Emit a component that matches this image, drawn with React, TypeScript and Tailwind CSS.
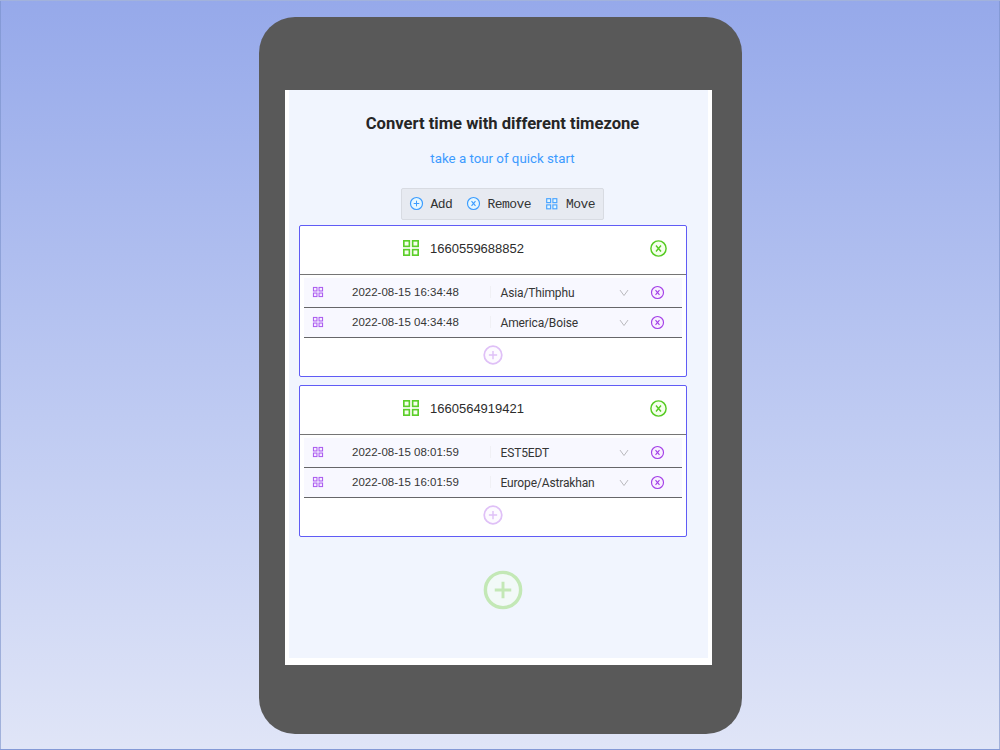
import { clsx } from "clsx";

type IconProps = {
  size: number;
  color: string;
  fill?: string;
  className?: string;
};

function PlusCircle({ size, color, fill = "none", className }: IconProps) {
  return (
    <svg width={size} height={size} viewBox="0 0 1024 1024" className={clsx("block shrink-0", className)}>
      <circle cx="512" cy="512" r="410" fill={fill} stroke={color} strokeWidth="80" />
      <path d="M320 512h384M512 320v384" stroke={color} strokeWidth="68" fill="none" />
    </svg>
  );
}

function CloseCircle({ size, color, fill = "none", className }: IconProps) {
  return (
    <svg width={size} height={size} viewBox="0 0 1024 1024" className={clsx("block shrink-0", className)}>
      <circle cx="512" cy="512" r="410" fill={fill} stroke={color} strokeWidth="78" />
      <path d="M377 353l270 318M647 353L377 671" stroke={color} strokeWidth="76" fill="none" />
    </svg>
  );
}

function Appstore({ size, color, fill = "none", className }: IconProps) {
  return (
    <svg width={size} height={size} viewBox="0 0 1024 1024" className={clsx("block shrink-0", className)}>
      <g fill={fill} stroke={color} strokeWidth="76">
        <rect x="178" y="178" width="258" height="258" />
        <rect x="588" y="178" width="258" height="258" />
        <rect x="178" y="588" width="258" height="258" />
        <rect x="588" y="588" width="258" height="258" />
      </g>
    </svg>
  );
}

function Down() {
  return (
    <svg width="12" height="12" viewBox="0 0 1024 1024" className="block shrink-0">
      <path d="M170 260l342 470 342-470" stroke="#b9b9bd" strokeWidth="84" fill="none" />
    </svg>
  );
}

type Zone = { time: string; zone: string };

const cards: { stamp: string; zones: Zone[] }[] = [
  {
    stamp: "1660559688852",
    zones: [
      { time: "2022-08-15 16:34:48", zone: "Asia/Thimphu" },
      { time: "2022-08-15 04:34:48", zone: "America/Boise" },
    ],
  },
  {
    stamp: "1660564919421",
    zones: [
      { time: "2022-08-15 08:01:59", zone: "EST5EDT" },
      { time: "2022-08-15 16:01:59", zone: "Europe/Astrakhan" },
    ],
  },
];

function ZoneRow({ time, zone }: Zone) {
  return (
    <div className="flex h-[30px] items-center border-b border-[#666669] bg-[#f8f8ff] pl-[7px]">
      <Appstore size={14} color="#ab5cf0" fill="#f5ebff" className="-mt-[1px]" />
      <div className="-mt-[2px] ml-[27px] w-[138.5px] border-r border-[#f0f0f5] font-['Liberation_Sans',sans-serif] text-[11.5px] leading-3 whitespace-nowrap text-[#353535]">
        {time}
      </div>
      <div className="ml-[10px] w-[117.5px] font-[Roboto,sans-serif] text-[12px] leading-4 tracking-[-0.14px] whitespace-nowrap text-[#353535]">
        {zone}
      </div>
      <Down />
      <CloseCircle size={15} color="#a33fe8" fill="#f9f0ff" className="-mt-[1px] ml-[20px]" />
    </div>
  );
}

function TimeCard({ stamp, zones }: { stamp: string; zones: Zone[] }) {
  return (
    <section className="h-[152px] w-[388px] rounded-[2px] border border-[#605cf5] bg-white">
      <div className="flex h-[49px] items-center border-b border-[#757575] pl-[100px]">
        <Appstore size={22} color="#5bce29" fill="#f6ffed" className="-mt-[5px]" />
        <span className="-mt-[2px] ml-[8px] w-[219px] font-['Liberation_Sans',sans-serif] text-[13px] leading-4 text-[#2c2c2c]">
          {stamp}
        </span>
        <CloseCircle size={19} color="#55cb22" fill="#f6ffed" className="-mt-[4px]" />
      </div>
      <div className="mx-1 pt-[3px]">
        {zones.map((z) => (
          <ZoneRow key={z.time} {...z} />
        ))}
      </div>
      <PlusCircle size={22} color="#dfc0f7" fill="#fdfaff" className="mx-auto mt-[6px]" />
    </section>
  );
}

export default function App() {
  return (
    <div className="flex h-[750px] w-[1000px] justify-center border border-[#7890c8]/60 bg-linear-to-b from-[#96a9ea] to-[#e0e5f7] pt-[15.5px]">
      <div className="h-[717px] w-[483px] rounded-[36px] bg-[#595959] pt-[73.5px] pl-[26.5px]">
        <div className="h-[575px] w-[427px] bg-white px-1 pb-[7px]">
          <main className="flex h-full flex-col items-center bg-[#f1f5fe] pl-[8px]">
            <h1 className="mt-[22px] font-[Roboto,sans-serif] text-[16.6px] leading-6 font-bold whitespace-nowrap text-[#262626]">
              Convert time with different timezone
            </h1>
            <a className="mt-[13px] font-[Roboto,sans-serif] text-[13.3px] leading-5 whitespace-nowrap text-[#3d9bff]">
              take a tour of quick start
            </a>
            <div className="mt-[19px] flex h-[32px] w-[203px] shrink-0 items-center rounded-[2px] border border-[#d8dbe2] bg-[#e7eaf1] pl-[7px] font-['Liberation_Mono',monospace] text-[13px] leading-4 tracking-[-0.53px] text-[#333333]">
              <PlusCircle size={15} color="#3b9cff" fill="#e6f7ff" className="-mt-[1px]" />
              <span className="mt-[1px] ml-[6.5px] w-[35.5px]">Add</span>
              <CloseCircle size={15} color="#3b9cff" fill="#e6f7ff" className="-mt-[1px]" />
              <span className="mt-[1px] ml-[6.5px] w-[56.5px]">Remove</span>
              <Appstore size={15.5} color="#4aa4ff" fill="#e6f7ff" className="-mt-[1px]" />
              <span className="mt-[1px] ml-[6.5px]">Move</span>
            </div>
            <div className="mt-[5px] flex shrink-0 flex-col gap-2 self-start pl-[2px]">
              {cards.map((c) => (
                <TimeCard key={c.stamp} {...c} />
              ))}
            </div>
            <PlusCircle size={44} color="#c3e8b6" fill="#f2f9f8" className="mt-[31px] ml-[1px]" />
          </main>
        </div>
      </div>
    </div>
  );
}
